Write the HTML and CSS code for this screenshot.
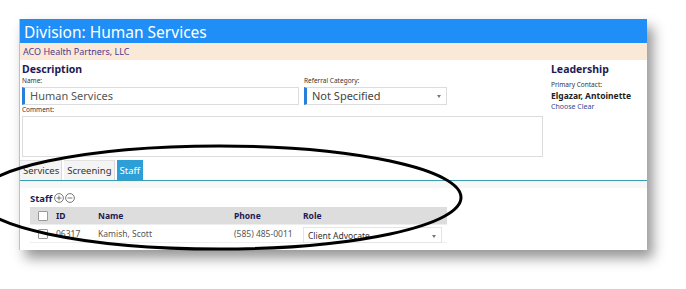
FILE: index.html
```html
<!DOCTYPE html>
<html lang="en">
<head>
    <meta charset="UTF-8">
    <title>Division: Human Services</title>
    <link rel="stylesheet" href="styles.css">
</head>
<body>

    <div class="window">
        <div class="title">Division: Human Services</div>
        <div class="org">ACO Health Partners, LLC</div>

        <div class="top">
            <div class="desc">
                <div class="heading">Description</div>
                <div class="row">
                    <div class="field name-field">
                        <div class="label">Name:</div>
                        <div class="input">Human Services</div>
                    </div>
                    <div class="field ref-field">
                        <div class="label">Referral Category:</div>
                        <div class="input select">Not Specified<span class="caret"></span></div>
                    </div>
                </div>
                <div class="label">Comment:</div>
                <div class="textarea"></div>
            </div>
            <div class="lead">
                <div class="heading">Leadership</div>
                <div class="label small">Primary Contact:</div>
                <div class="contact">Elgazar, Antoinette</div>
                <div class="links">Choose Clear</div>
            </div>
        </div>

        <div class="tabs">
            <div class="tab">Services</div>
            <div class="tab">Screening</div>
            <div class="tab active">Staff</div>
        </div>
        <div class="band"></div>

        <div class="staff">
            <div class="staff-head">
                <span>Staff</span>
                <svg class="ico" width="10" height="10" viewBox="0 0 10 10">
                    <circle cx="5" cy="5" r="4.4" fill="none" stroke="#555" stroke-width="0.8"/>
                    <path d="M5 2.6V7.4M2.6 5H7.4" stroke="#555" stroke-width="0.8"/>
                </svg>
                <svg class="ico" width="10" height="10" viewBox="0 0 10 10">
                    <circle cx="5" cy="5" r="4.4" fill="none" stroke="#555" stroke-width="0.8"/>
                    <path d="M2.6 5H7.4" stroke="#555" stroke-width="0.8"/>
                </svg>
            </div>
            <div class="table">
                <div class="tr th">
                    <div class="c-chk"><span class="box"></span></div>
                    <div class="c-id">ID</div>
                    <div class="c-name">Name</div>
                    <div class="c-phone">Phone</div>
                    <div class="c-role">Role</div>
                </div>
                <div class="tr">
                    <div class="c-chk"><span class="box"></span></div>
                    <div class="c-id">06317</div>
                    <div class="c-name">Kamish, Scott</div>
                    <div class="c-phone">(585) 485-0011</div>
                    <div class="c-role"><div class="role-select">Client Advocate<span class="caret"></span></div></div>
                </div>
                <div class="tr empty"></div>
            </div>
        </div>
    </div>

    <!-- hand-drawn annotation over the screenshot -->
    <svg class="mark" width="686" height="289" viewBox="0 0 686 289">
        <ellipse cx="219" cy="197.5" rx="242" ry="51.5" fill="none" stroke="#000" stroke-width="3"/>
    </svg>

</body>
</html>
```

FILE: styles.css
```css
body {
    margin: 0;
    padding: 0;
    background: #ffffff;
    font-family: "Noto Sans", "Open Sans", sans-serif;
    overflow: hidden;
    height: 289px;
}

/* screenshot window */
.window {
    margin: 19px 0 0 19px;
    width: 628px;
    height: 231px;
    overflow: hidden;
    background: #ffffff;
    border-left: 1px solid #b9c2c9;
    box-sizing: border-box;
    box-shadow: 6px 8px 12px rgba(0, 0, 0, 0.42);
}

.title {
    height: 24px;
    background: #1f8ff7;
    color: #ffffff;
    font-size: 15.5px;
    line-height: 26px;
    padding-left: 4px;
}

.org {
    height: 17px;
    background: #fbe9d8;
    color: #4a3b8c;
    font-size: 9px;
    line-height: 18px;
    padding-left: 3px;
}

.top {
    display: flex;
    padding-left: 2px;
}

.desc {
    width: 521px;
}

.heading {
    color: #1d1a55;
    font-weight: bold;
    font-size: 10.5px;
    line-height: 13px;
    padding-top: 3px;
}

.label {
    font-size: 6.5px;
    color: #333;
    line-height: 10px;
}

.row {
    display: flex;
}

.name-field {
    width: 282px;
}

.input {
    width: 277px;
    height: 18px;
    box-sizing: border-box;
    border: 1px solid #dcdcdc;
    border-left: 3px solid #2a7fd8;
    font-size: 11px;
    line-height: 16px;
    color: #555;
    padding-left: 5px;
    position: relative;
    margin-top: 1px;
}

.ref-field .input {
    width: 143px;
    color: #444;
}

.caret {
    position: absolute;
    right: 5px;
    top: 7px;
    border-left: 2.5px solid transparent;
    border-right: 2.5px solid transparent;
    border-top: 3px solid #777;
}

.textarea {
    width: 521px;
    height: 41px;
    box-sizing: border-box;
    border: 1px solid #dcdcdc;
    margin-top: 1px;
}

.lead {
    margin-left: 8px;
}

.small {
    margin-top: 4px;
}

.contact {
    font-weight: bold;
    font-size: 8.5px;
    color: #222;
    line-height: 12px;
}

.links {
    color: #2b4a9a;
    font-size: 7px;
    line-height: 9px;
}

/* tabs */
.tabs {
    display: flex;
    gap: 2px;
    margin-top: 3px;
    height: 20px;
    border-bottom: 1px solid #3b9fb4;
}

.tab {
    font-size: 9.5px;
    line-height: 19px;
    padding: 0 2px 0 3px;
    color: #333;
    background: #f4f4f4;
    border-right: 1px solid #dadada;
    border-top: 1px solid #e2e2e2;
}

.tab.active {
    background: #2c9fd8;
    color: #ffffff;
    border-color: #2c9fd8;
}

.band {
    height: 7px;
    background: #f7f7f7;
}

/* staff grid */
.staff {
    padding-left: 10px;
}

.staff-head {
    display: flex;
    align-items: center;
    height: 18px;
    margin-top: 1px;
    color: #1d1a55;
    font-weight: bold;
    font-size: 9.5px;
}

.staff-head span {
    margin-right: 2px;
}

.ico {
    margin-right: 1px;
}

.table {
    width: 417px;
}

.tr {
    display: flex;
    align-items: center;
    height: 17px;
    font-size: 8.5px;
    color: #555;
    border-bottom: 1px solid #eeeeee;
}

.th {
    background: #dddddd;
    color: #1d1a55;
    font-weight: bold;
}

.empty {
    border-bottom: none;
}

.c-chk {
    width: 26px;
    display: flex;
    justify-content: center;
}

.box {
    width: 8px;
    height: 8px;
    border: 1px solid #999;
    background: #fff;
    border-radius: 1px;
}

.c-id {
    width: 42px;
}

.c-name {
    width: 136px;
}

.c-phone {
    width: 69px;
}

.c-role {
    flex: 1;
}

.role-select {
    position: relative;
    width: 139px;
    height: 16px;
    line-height: 16px;
    border: 1px solid #e4e4e4;
    box-sizing: border-box;
    padding-left: 4px;
    color: #333;
    margin-top: 2px;
}

.mark {
    position: absolute;
    left: 0;
    top: 0;
}
```
